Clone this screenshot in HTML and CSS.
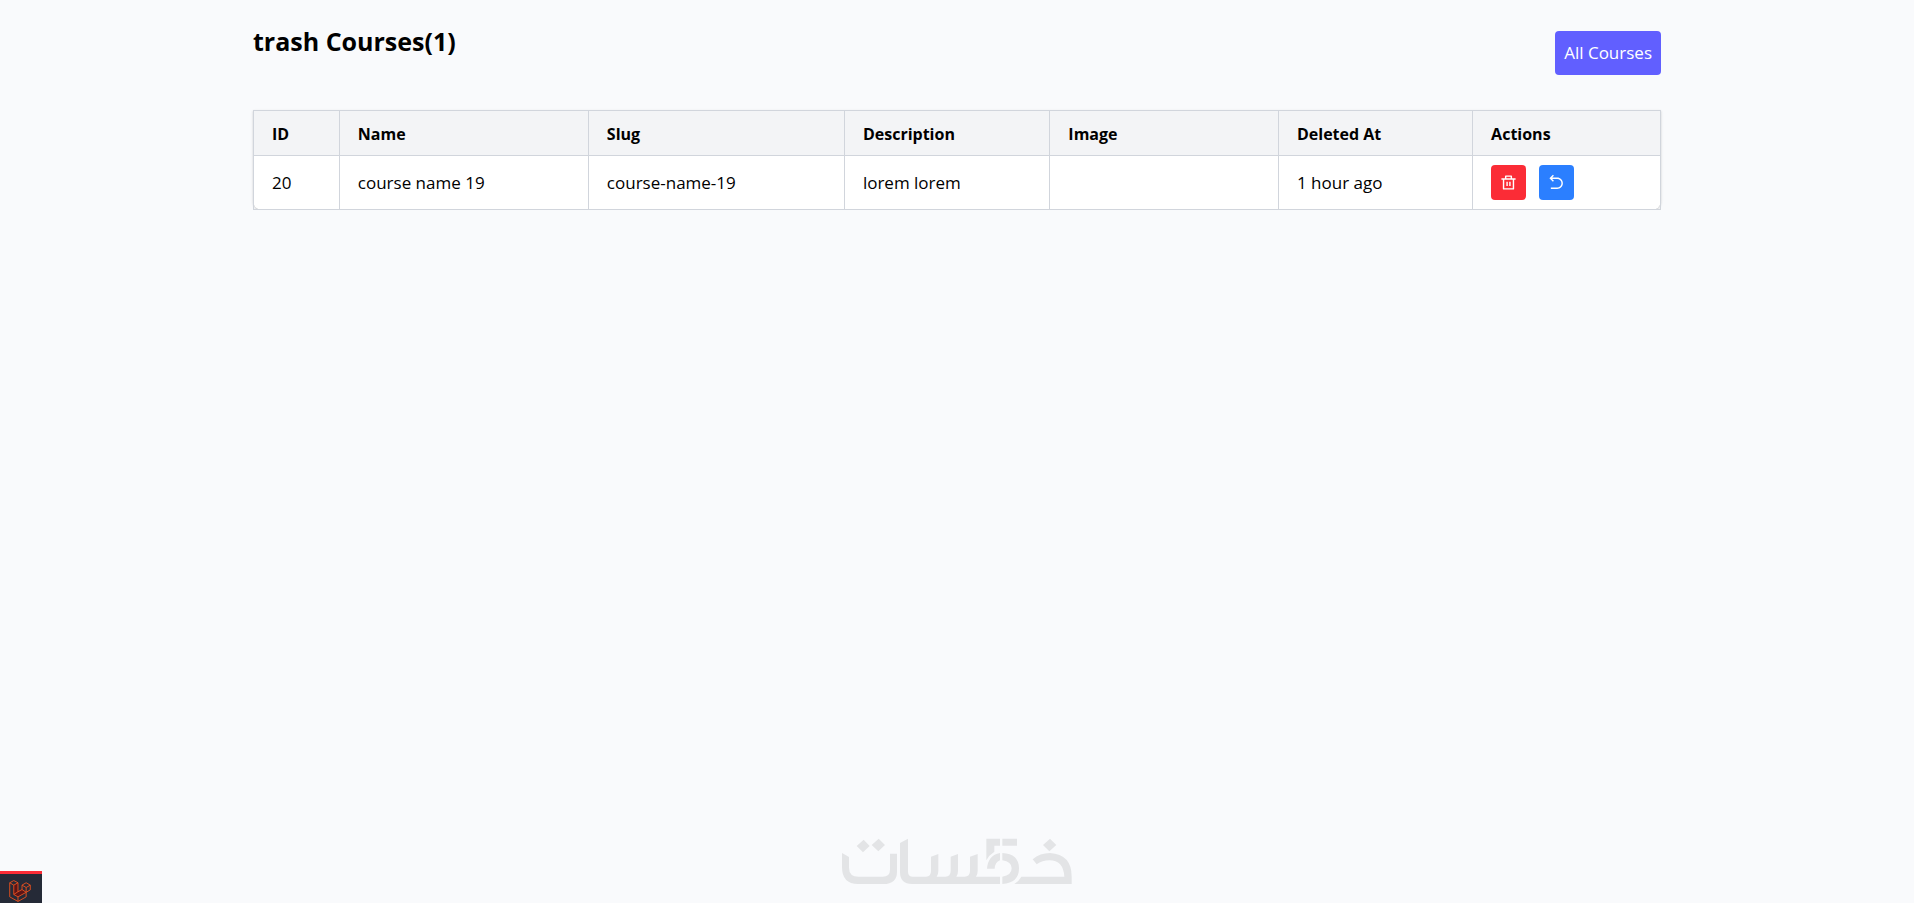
FILE: index.html
```html
<!DOCTYPE html>
<html lang="en">
<head>
<meta charset="utf-8">
<meta name="viewport" content="width=device-width, initial-scale=1">
<title>trash Courses</title>
<link rel="stylesheet" href="styles.css">
</head>
<body>
<main class="container">
  <header class="page-header">
    <h1 class="page-title">trash Courses(1)</h1>
    <a class="btn-all" href="#">All Courses</a>
  </header>
  <table class="courses">
    <colgroup>
      <col class="col-id"><col class="col-name"><col class="col-slug"><col class="col-description"><col class="col-image"><col class="col-deleted"><col class="col-actions">
    </colgroup>
    <thead>
      <tr><th>ID</th><th>Name</th><th>Slug</th><th>Description</th><th>Image</th><th>Deleted At</th><th>Actions</th></tr>
    </thead>
    <tbody>
      <tr>
        <td>20</td><td>course name 19</td><td>course-name-19</td><td>lorem lorem</td><td></td><td>1 hour ago</td>
        <td>
          <div class="actions">
            <button class="icon-btn delete" type="button" aria-label="Delete">
              <svg viewBox="0 0 24 24"><path d="M17 6H22V8H20V21C20 21.55 19.55 22 19 22H5C4.45 22 4 21.55 4 21V8H2V6H7V3C7 2.45 7.45 2 8 2H16C16.55 2 17 2.45 17 3V6ZM18 8H6V20H18V8ZM9 11H11V17H9V11ZM13 11H15V17H13V11ZM9 4V6H15V4H9Z"/></svg>
            </button>
            <button class="icon-btn restore" type="button" aria-label="Restore">
              <svg viewBox="0 0 24 24"><path d="M5.83 7L8.36 9.54L6.95 10.95L2 6L6.95 1.05L8.36 2.46L5.83 5H13C17.42 5 21 8.58 21 13C21 17.42 17.42 21 13 21H4V19H13C16.31 19 19 16.31 19 13C19 9.69 16.31 7 13 7H5.83Z"/></svg>
            </button>
          </div>
        </td>
      </tr>
    </tbody>
  </table>
</main>

<svg class="watermark" viewBox="0 0 765 210" role="img" aria-label="Khamsat">
  <path d="M36 84L57 96V128Q57 155 86 155H158Q180 155 180 134V86H201V140Q201 177 160 177H84Q36 177 36 126Z"/>
  <path d="M80 63L101 44L119 63L99 82ZM125 60L146 41L165 60L145 79Z"/>
  <path d="M210 54L234 41V140Q234 155 249 155H288Q303 155 303 138V95L325 87V138Q325 148 320 155H346Q362 155 362 138V95L384 87V138Q384 148 379 155H404Q420 155 420 138V95L443 87V138Q443 148 438 155H510V177H246Q210 177 210 142Z"/>
  <path d="M469 41H510V62H493V80Q477 90 469 106ZM517 41H561V62H517Z"/>
  <path d="M510 84V106Q495 112 494 131H471Q474 91 510 84ZM517 84Q567 87 567 130Q567 174 517 177V155Q545 151 545 130Q545 110 517 106Z"/>
  <path d="M639 60L660 41L679 60L658 79Z"/>
  <path d="M608 103Q630 84 660 84Q725 88 725 155V177H553Q567 168 574 155H703Q700 106 658 106Q637 106 620 118Z"/>
</svg>

<button class="debugbar" type="button" aria-label="Open debug bar">
  <svg viewBox="0 0 24 24">
    <path class="side" d="M5.2 5.6L9.8 3V12.8L5.2 15.8ZM14.2 10.4L18.7 13.4L9.8 18.4L5.2 15.8Z"/>
    <path class="front" d="M.8 3L5.2.6L9.8 3V12.8L5.2 15.8V5.6L.8 3V18.4L9.8 23.4L18.7 18.4V8.2L14.2 5.6L18.7 3L23.2 5.6V10.8L18.7 13.4L9.8 18.4V23.4M5.2 5.6L9.8 3M5.2 15.8L9.8 18.4M9.8 12.8L14.2 10.4V5.6M14.2 10.4L18.7 13.4M18.7 8.2L23.2 5.6"/>
  </svg>
</button>
</body>
</html>
```

FILE: styles.css
```css
* {
  box-sizing: border-box;
}

body {
  margin: 0;
  background: #f9fafc;
  color: #000;
  font: 17px/26px "Open Sans", "Noto Sans", sans-serif;
}

.container {
  max-width: 1408px;
  margin: 0 auto;
  padding-top: 22px;
}

.page-header {
  display: flex;
  justify-content: space-between;
  align-items: flex-start;
  margin-bottom: 35px;
}

.page-title {
  margin: 0;
  font-size: 25px;
  line-height: 38px;
  font-weight: 700;
}

.btn-all {
  margin-top: 9px;
  padding: 9px;
  border-radius: 4px;
  background: #615fff;
  color: #fff;
  text-decoration: none;
}

.courses {
  width: 100%;
  table-layout: fixed;
  border-collapse: collapse;
  background: #fff;
  border-radius: 0 0 9px 9px;
  box-shadow: 0 1px 3px rgba(0, 0, 0, 0.1), 0 1px 2px rgba(0, 0, 0, 0.1);
}

.col-id { width: 6.1%; }
.col-name { width: 17.7%; }
.col-slug { width: 18.2%; }
.col-description { width: 14.6%; }
.col-image { width: 16.25%; }
.col-deleted { width: 13.8%; }
.col-actions { width: 13.35%; }

.courses th,
.courses td {
  padding: 9px 18px;
  border: 1px solid #d1d5dc;
  text-align: left;
}

.courses th {
  padding: 10px 18px 8px;
  background: #f3f4f6;
  font-size: 16px;
  font-weight: 700;
}

.actions {
  display: flex;
  gap: 13px;
}

.icon-btn {
  display: flex;
  padding: 9px;
  border: 0;
  border-radius: 4px;
  color: #fff;
}

.icon-btn svg {
  width: 17px;
  height: 17px;
  fill: currentColor;
}

.delete { background: #fb2c36; }
.restore { background: #2b7fff; }

.watermark {
  position: fixed;
  bottom: 8px;
  left: 0;
  right: 0;
  width: 255px;
  margin: 0 auto;
  fill: #e3e4e6;
}

.debugbar {
  position: fixed;
  left: 0;
  bottom: 0;
  display: flex;
  padding: 6px 11px 1px 9px;
  border: 0;
  border-top: 3px solid #fb2c36;
  background: #252a37;
}

.debugbar svg {
  width: 22px;
  height: 22px;
  fill: none;
}

.debugbar .front { stroke: #e8501f; }
.debugbar .side { fill: #5c1416; }
```
